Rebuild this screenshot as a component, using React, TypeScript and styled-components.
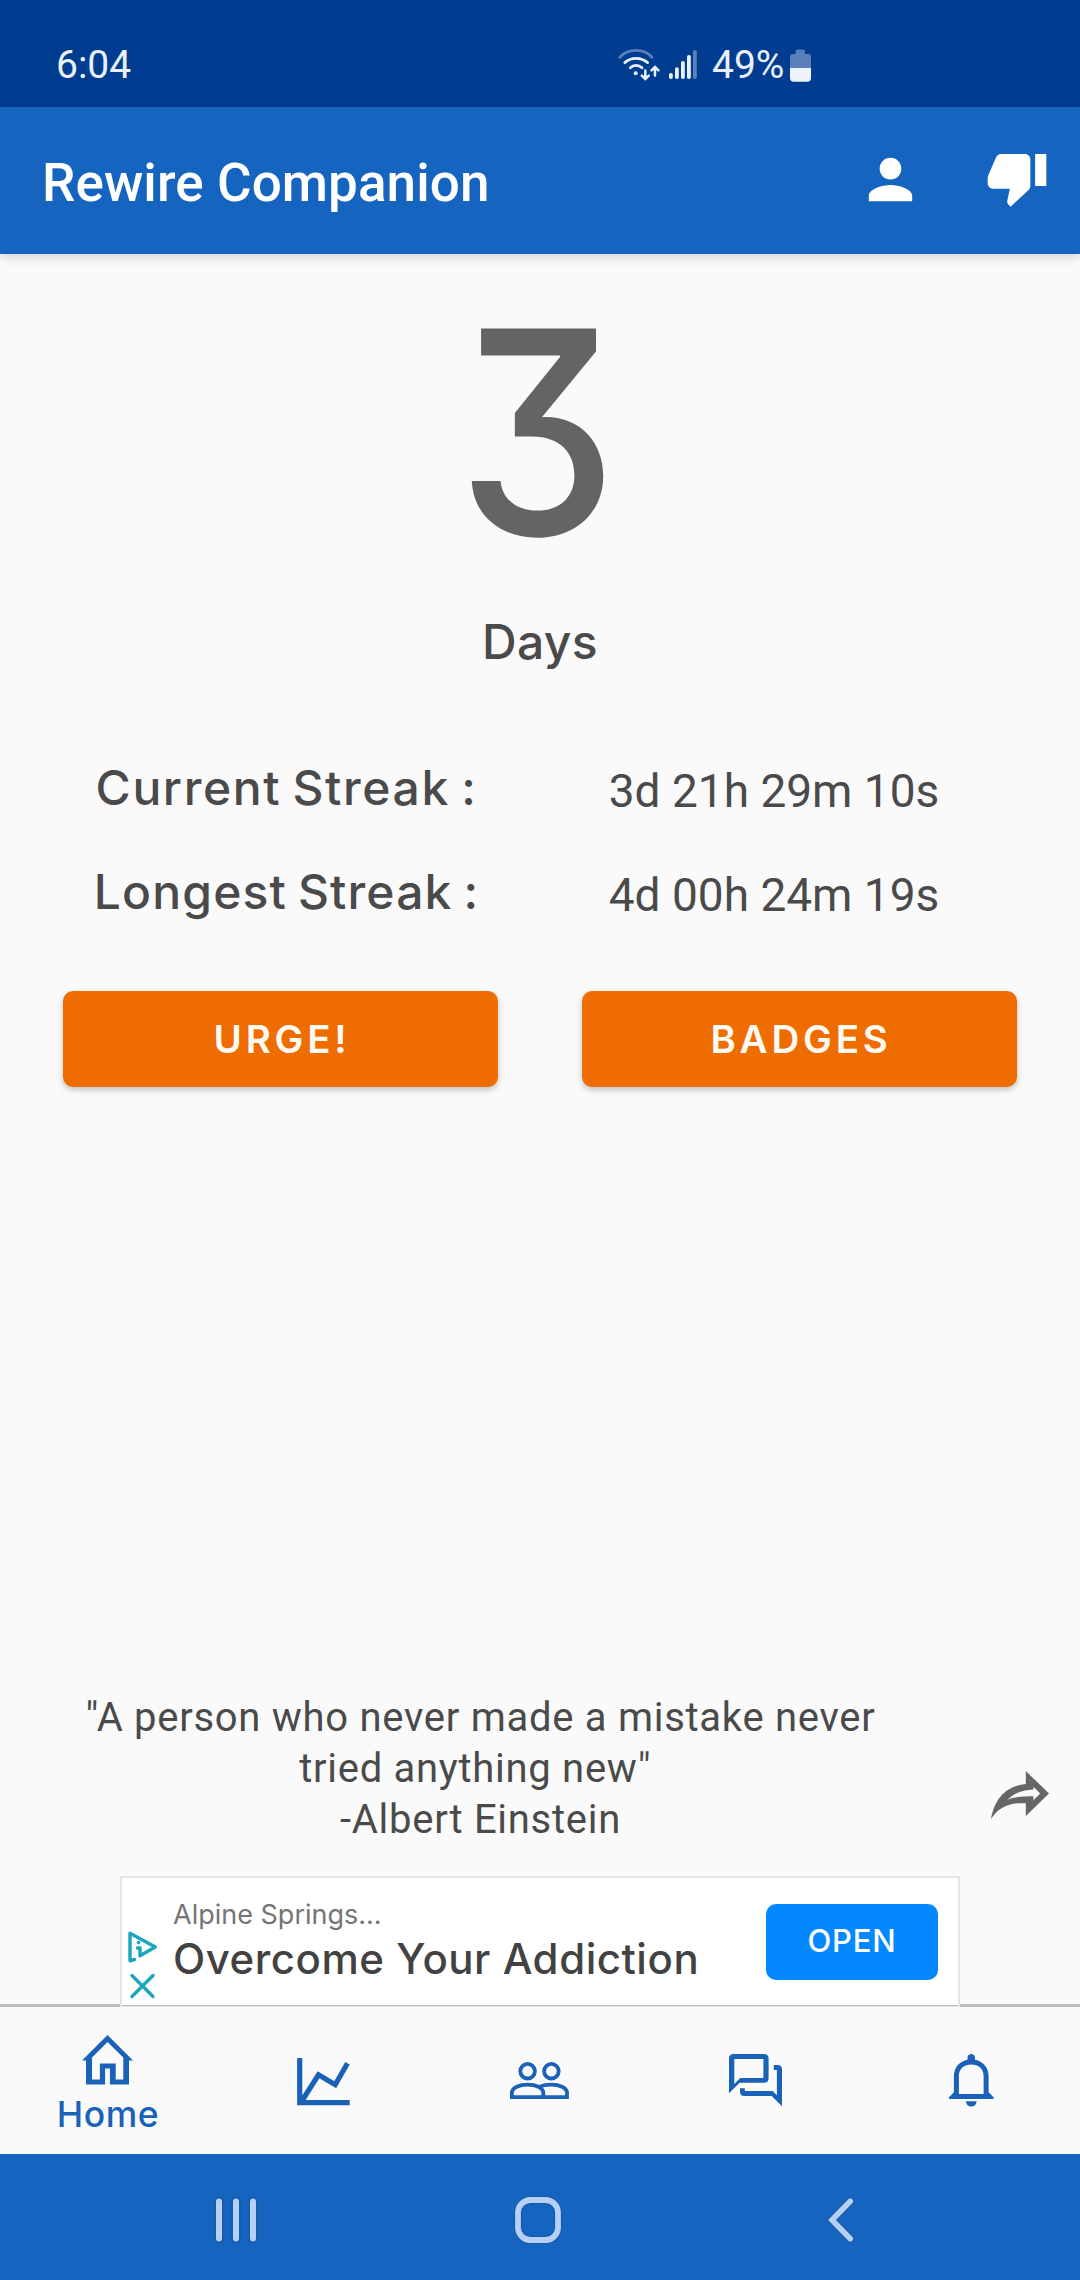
import React from "react";
import styled, { createGlobalStyle } from "styled-components";

const color = {
  primary: "#1565c0",
  primaryDark: "#003c8f",
  accent: "#ef6c00",
  surface: "#fafafa",
  text: "#4a4a4a",
  muted: "#646464",
  navIcon: "#1a62b7",
  divider: "#bdbdbd",
  system: "#b5d0f4",
  adTeal: "#1ba6bc",
};

const geometric = `Inter, "Liberation Sans", sans-serif`;
const roboto = `Roboto, "Liberation Sans", sans-serif`;

const GlobalStyle = createGlobalStyle`
  * { box-sizing: border-box; }
  body { margin: 0; background: ${color.surface}; }
  svg { display: block; flex: none; overflow: visible; }
`;

const Screen = styled.div`
  width: 1080px;
  height: 2280px;
  display: flex;
  flex-direction: column;
  background: ${color.surface};
  font-family: ${roboto};
  overflow: hidden;
`;

const StatusBar = styled.div`
  flex: none;
  height: 107px;
  padding: 23px 269px 0 56px;
  display: flex;
  align-items: center;
  justify-content: space-between;
  background: ${color.primaryDark};
  color: #eaf1fd;
  font-size: 39px;
  line-height: 40px;
`;

const StatusIcons = styled.div`
  width: 193px;
  display: flex;
  align-items: center;
`;

const BatteryLevel = styled.span`
  width: 78px;
  margin-left: 15px;
`;

const SignalSlot = styled.div`
  margin-left: 9px;
`;

const Header = styled.header`
  flex: none;
  height: 147px;
  padding: 5px 31px 0 42px;
  display: flex;
  align-items: center;
  background: ${color.primary};
  box-shadow: 0 3px 10px rgba(0, 0, 0, 0.16);
  z-index: 1;
`;

const Title = styled.h1`
  flex: 1;
  margin: 0;
  color: #fff;
  font: 500 53px/62px ${roboto};
  letter-spacing: 0.08px;
`;

const HeaderAction = styled.div<{ $lift: number }>`
  width: 65px;
  margin-left: 61px;
  padding-bottom: ${(p) => p.$lift}px;
  display: flex;
  justify-content: center;
`;

const Main = styled.main`
  flex: 1;
  min-height: 0;
  padding-top: 6px;
  display: flex;
  flex-direction: column;
  color: ${color.text};
`;

const DayCount = styled.div`
  align-self: center;
  margin-right: 6px;
  color: ${color.muted};
  font: 500 284px/344px ${geometric};
  font-feature-settings: "cv09";
  transform: scaleX(0.895);
`;

const DayLabel = styled.div`
  margin: 9px 0 89px;
  text-align: center;
  letter-spacing: 0.4px;
  font: 500 48px/57px ${geometric};
`;

const Streaks = styled.div`
  display: grid;
  grid-template-columns: 570px 408px;
  row-gap: 47px;
  text-align: center;
`;

const StreakLabel = styled.div<{ $tracking: number }>`
  padding-left: 3px;
  font: 500 48px/57px ${geometric};
  letter-spacing: ${(p) => p.$tracking}px;
  word-spacing: -3px;
`;

const StreakValue = styled.div`
  padding-top: 5px;
  height: 57px;
  font-size: 46px;
  line-height: 54px;
`;

const Actions = styled.div`
  margin-top: 71px;
  padding: 0 63px;
  display: grid;
  grid-template-columns: 1fr 1fr;
  gap: 84px;
`;

const ActionButton = styled.button`
  height: 96px;
  padding: 0 0 0 3px;
  border: 0;
  border-radius: 10px;
  background: ${color.accent};
  color: #fffaf2;
  box-shadow: 0 3px 6px rgba(0, 0, 0, 0.22);
  font: 600 38.5px/46px ${geometric};
  letter-spacing: 3.8px;
`;

const QuoteRow = styled.div`
  margin-top: auto;
  padding-right: 31px;
  display: flex;
  align-items: flex-end;
  justify-content: space-between;
`;

const Quote = styled.div`
  width: 961px;
  text-align: center;
  font-size: 40px;
  line-height: 51px;
  letter-spacing: 0.72px;
  white-space: pre;
`;

const ShareSlot = styled.div`
  margin-bottom: 26px;
`;

const AdBanner = styled.div`
  position: relative;
  z-index: 1;
  width: 840px;
  height: 131px;
  margin: 31px 0 -3px 120px;
  display: flex;
  background: #fff;
  border: 2px solid #e4e4e4;
  border-bottom-width: 1px;
  box-shadow: inset 0 -1px 0 ${color.divider};
`;

const AdMarks = styled.div`
  width: 51px;
  padding: 53px 0 0 6px;
  display: flex;
  flex-direction: column;
  gap: 11px;
`;

const AdCopy = styled.div`
  flex: 1;
  padding-top: 20px;
`;

const AdAdvertiser = styled.div`
  color: #757575;
  font: 400 27px/33px ${geometric};
`;

const AdHeadline = styled.div`
  margin-top: 2px;
  color: #424242;
  font: 500 42px/51px ${geometric};
  letter-spacing: 0.54px;
  white-space: nowrap;
`;

const AdButton = styled.button`
  width: 172px;
  height: 76px;
  margin: 26px 20px 0 0;
  padding: 0 0 2px;
  border: 0;
  border-radius: 10px;
  background: #0488ff;
  color: #fff;
  font: 500 31px/38px ${geometric};
  letter-spacing: 0.8px;
`;

const BottomNav = styled.nav`
  flex: none;
  height: 150px;
  border-top: 3px solid ${color.divider};
  display: grid;
  grid-template-columns: repeat(5, 1fr);
  background: ${color.surface};
  color: ${color.navIcon};
`;

const NavItem = styled.div<{ $top: number }>`
  padding: ${(p) => p.$top}px 2px 0 0;
  display: flex;
  flex-direction: column;
  align-items: center;
`;

const NavLabel = styled.span`
  margin-top: 9px;
  padding-left: 2px;
  font: 500 35.5px/42px ${geometric};
  letter-spacing: 0.6px;
`;

const SystemBar = styled.div`
  flex: none;
  height: 126px;
  padding: 5px 89px 0 85px;
  display: grid;
  grid-template-columns: repeat(3, 1fr);
  align-items: center;
  justify-items: center;
  background: ${color.primary};
`;

const WifiIcon = () => (
  <svg width="42" height="34" viewBox="0 0 42 34" fill="none" stroke="#eaf1fd" strokeWidth="2.8" strokeLinecap="round">
    <path d="M1.8 9.2C10.5 .2 25.5 .2 34 9.2" stroke="#5a80bc" />
    <path d="M6.8 14.6C13 9 23 9 29.6 14.6" />
    <path d="M12.3 19.8C15.5 16.6 20.5 16.6 24 19.8" />
    <circle cx="17.7" cy="25.2" r="2" fill="#eaf1fd" stroke="none" />
    <path d="M27.3 22.5V30.5M23.8 27.6L27.3 31L30.8 27.6M37 27.5V19.5M33.5 22.4L37 19L40.5 22.4" strokeWidth="2.5" />
  </svg>
);

const signalTops = [25, 19.3, 13, 7, 2];
const SignalIcon = () => (
  <svg width="28" height="34" viewBox="0 0 28 34">
    {signalTops.map((top, i) => (
      <rect key={top} x={i * 6} y={top} width="3.8" height={31 - top} rx="1.8" fill={i === 4 ? "#5a80bc" : "#eaf1fd"} />
    ))}
  </svg>
);

const BatteryIcon = () => (
  <svg width="21" height="34" viewBox="0 0 21 34">
    <path d="M5.5 3.5Q5.5 1.5 7.5 1.5H13Q15 1.5 15 3.5V6H18Q21 6 21 9V20H0V9Q0 6 3 6H5.5Z" fill="#5a80bc" />
    <path d="M0 20H21V30Q21 33.7 17.5 33.7H3.5Q0 33.7 0 30Z" fill="#eef2fb" />
  </svg>
);

const PersonIcon = () => (
  <svg width="65" height="65" viewBox="0 0 24 24" fill="#fff">
    <path d="M12 12c2.21 0 4-1.79 4-4s-1.79-4-4-4-4 1.79-4 4 1.79 4 4 4zm0 2c-2.67 0-8 1.34-8 4v2h16v-2c0-2.66-5.33-4-8-4z" />
  </svg>
);

const ThumbDownIcon = () => (
  <svg width="64" height="64" viewBox="0 0 24 24" fill="#fff">
    <path d="M15 3H6c-.83 0-1.54.5-1.84 1.22l-3.02 7.05c-.09.23-.14.47-.14.73v2c0 1.1.9 2 2 2h6.31l-.95 4.57-.03.32c0 .41.17.79.44 1.06L9.6 22.75l6.82-6.34c.36-.36.58-.86.58-1.41V5c0-1.1-.9-2-2-2zm3.8 0v12H23V3h-4.2z" />
  </svg>
);

const ShareIcon = () => (
  <svg width="58" height="48" viewBox="0 0 58 48" fill="#666" fillRule="evenodd">
    <path d="M0 48C3 32 11 15.500 34.800 13V0L58 22.600L34.800 45V32.300C18 31.500 8 36 0 48ZM16.500 28.800C24 25.600 33 25.300 42.400 25.300V29.300L49.200 22.600L42.400 15.700V18.500C31 19.500 22.500 22 16.500 28.800Z" />
  </svg>
);

const AdChoicesIcon = () => (
  <svg width="30" height="32" viewBox="0 0 30 32" fill="none" stroke={color.adTeal} strokeWidth="3.4" strokeLinejoin="round" strokeLinecap="round">
    <path d="M6.500 28.500L2 29.800V2.300L27.300 16L12 24.800V17H9.500" />
    <circle cx="10.600" cy="11.600" r="1.800" fill={color.adTeal} stroke="none" />
  </svg>
);

const AdCloseIcon = () => (
  <svg width="30" height="24" viewBox="0 0 30 24" fill="none" stroke={color.adTeal} strokeWidth="3.4" strokeLinecap="round">
    <path d="M4 1.500L25 22.500M25 1.500L4 22.500" />
  </svg>
);

const HomeIcon = () => (
  <svg width="51" height="50" viewBox="0 0 51 50" fill="currentColor" fillRule="evenodd">
    <path d="M25.500 0L51 25.600H47V49.500H27.900V33.500H23.100V49.500H4V25.600H0ZM25.500 7L10 22.600V44.500H17.900V28.500H33.700V44.500H41.300V22.600Z" />
  </svg>
);

const ChartIcon = () => (
  <svg width="53" height="48" viewBox="0 0 53 48" fill="none" stroke="currentColor" strokeWidth="5.2">
    <path d="M2.700 0V44.600H52.700M4.500 43.500L21.500 16.800L38.200 26.700L50.500 5.200" />
  </svg>
);

const PeopleIcon = () => (
  <svg width="59" height="37" viewBox="0 0 59 37" fill="none" stroke="currentColor" strokeWidth="3.8">
    <circle cx="17.600" cy="9.200" r="7.300" />
    <circle cx="41.400" cy="9.200" r="7.300" />
    <path d="M1.900 35.200V31C1.900 25.500 9.700 22.700 17.600 22.700S33.300 25.500 33.300 31V35.200Z" />
    <path d="M28.500 25.400C32 23.500 37 22.700 41.400 22.700C49.200 22.700 57 25.500 57 31V35.200H33" />
  </svg>
);

const ForumIcon = () => (
  <svg width="53" height="53" viewBox="0 0 53 53" fill="currentColor" fillRule="evenodd">
    <path d="M0 39.300V4.500Q0 0 4.500 0H35Q39.600 0 39.600 4.500V24.200Q39.600 28.700 35 28.700H10.600ZM5.300 30L11.200 23.900H34.400V5H5.300Z" />
    <path d="M44.800 11H48.500Q53 11 53 15.500V52.300L42.700 42H15.500Q11 42 11 37.500V34.300H15.800V37H43.500L47.900 41.300V16H44.800Z" />
  </svg>
);

const BellIcon = () => (
  <svg width="45" height="53" viewBox="0 0 45 53" fill="currentColor" fillRule="evenodd">
    <path d="M18.500 5.800V3.700C18.500 -1.200 26 -1.200 26 3.700V5.800C34.500 7.500 39.600 14 39.600 22V38.300L44.500 43.200V45H0V43.200L4.900 38.300V22C4.900 14 10 7.500 18.500 5.800ZM9.900 40H34.600V22C34.600 15 29.500 10.600 22.250 10.600S9.900 15 9.900 22Z" />
    <path d="M17 47.200H27.500C27.500 54.200 17 54.200 17 47.200Z" />
  </svg>
);

const halo = "#185ba9";

const RecentsIcon = () => (
  <svg width="42" height="44" viewBox="0 0 42 44" strokeLinecap="round">
    <path d="M4 3.500V40.500M21 3.500V40.500M38 3.500V40.500" stroke={halo} strokeWidth="10" />
    <path d="M4 3.500V40.500M21 3.500V40.500M38 3.500V40.500" stroke={color.system} strokeWidth="6" />
  </svg>
);

const SystemHomeIcon = () => (
  <svg width="46" height="46" viewBox="0 0 46 46" fill="none">
    <rect x="3" y="3" width="40" height="40" rx="12.500" stroke={halo} strokeWidth="8.500" />
    <rect x="3" y="3" width="40" height="40" rx="12.500" stroke={color.system} strokeWidth="5.800" />
  </svg>
);

const BackIcon = () => (
  <svg width="25" height="44" viewBox="0 0 25 44" fill="none" strokeLinecap="round">
    <path d="M22.300 3.200L4 22L22.300 40.800" stroke={halo} strokeWidth="8.500" />
    <path d="M22.300 3.200L4 22L22.300 40.800" stroke={color.system} strokeWidth="5.600" />
  </svg>
);

const streaks = [
  { label: "Current Streak :", value: "3d 21h 29m 10s", tracking: 1.6 },
  { label: "Longest Streak :", value: "4d 00h 24m 19s", tracking: 1.15 },
];

const quoteLines = ['"A person who never made a mistake never', 'tried anything new"\u00a0', "-Albert Einstein"];

export default function App() {
  return (
    <Screen>
      <GlobalStyle />
      <StatusBar>
        <span>6:04</span>
        <StatusIcons>
          <WifiIcon />
          <SignalSlot><SignalIcon /></SignalSlot>
          <BatteryLevel>49%</BatteryLevel>
          <BatteryIcon />
        </StatusIcons>
      </StatusBar>
      <Header>
        <Title>Rewire Companion</Title>
        <HeaderAction $lift={7}><PersonIcon /></HeaderAction>
        <HeaderAction $lift={11}><ThumbDownIcon /></HeaderAction>
      </Header>
      <Main>
        <DayCount>3</DayCount>
        <DayLabel>Days</DayLabel>
        <Streaks>
          {streaks.map((s) => (
            <React.Fragment key={s.label}>
              <StreakLabel $tracking={s.tracking}>{s.label}</StreakLabel>
              <StreakValue>{s.value}</StreakValue>
            </React.Fragment>
          ))}
        </Streaks>
        <Actions>
          <ActionButton>URGE!</ActionButton>
          <ActionButton>BADGES</ActionButton>
        </Actions>
        <QuoteRow>
          <Quote>{quoteLines.join("\n")}</Quote>
          <ShareSlot><ShareIcon /></ShareSlot>
        </QuoteRow>
        <AdBanner>
          <AdMarks>
            <AdChoicesIcon />
            <AdCloseIcon />
          </AdMarks>
          <AdCopy>
            <AdAdvertiser>Alpine Springs...</AdAdvertiser>
            <AdHeadline>Overcome Your Addiction</AdHeadline>
          </AdCopy>
          <AdButton>OPEN</AdButton>
        </AdBanner>
      </Main>
      <BottomNav>
        <NavItem $top={28}>
          <HomeIcon />
          <NavLabel>Home</NavLabel>
        </NavItem>
        <NavItem $top={51}><ChartIcon /></NavItem>
        <NavItem $top={55}><PeopleIcon /></NavItem>
        <NavItem $top={47}><ForumIcon /></NavItem>
        <NavItem $top={47}><BellIcon /></NavItem>
      </BottomNav>
      <SystemBar>
        <RecentsIcon />
        <SystemHomeIcon />
        <BackIcon />
      </SystemBar>
    </Screen>
  );
}
